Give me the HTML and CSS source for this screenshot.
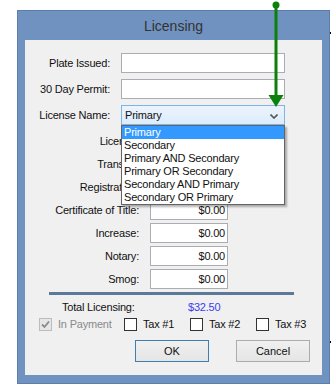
FILE: index.html
```html
<!DOCTYPE html>
<html lang="en">
<head>
    <meta charset="UTF-8">
    <meta name="viewport" content="width=device-width, initial-scale=1.0">
    <title>Licensing</title>
    <link rel="stylesheet" href="styles.css">
</head>
<body>
    <div class="window">
        <div class="titlebar">Licensing</div>
        <div class="client">
            <div class="row top-row">
                <label class="label">Plate Issued:</label>
                <div class="textbox long"></div>
            </div>
            <div class="row top-row">
                <label class="label">30 Day Permit:</label>
                <div class="textbox long"></div>
            </div>
            <div class="row top-row">
                <label class="label">License Name:</label>
                <div class="combo">
                    <span>Primary</span>
                    <svg class="chevron" width="8" height="5" viewBox="0 0 8 5"><polyline points="0.5,0.5 4,4 7.5,0.5" fill="none" stroke="#555" stroke-width="1.6"/></svg>
                    <ul class="dropdown">
                        <li class="selected">Primary</li>
                        <li>Secondary</li>
                        <li>Primary AND Secondary</li>
                        <li>Primary OR Secondary</li>
                        <li>Secondary AND Primary</li>
                        <li>Secondary OR Primary</li>
                    </ul>
                </div>
            </div>
            <div class="fees">
                <div class="row fee-row">
                    <label class="label">License:</label>
                    <div class="textbox money">$0.00</div>
                </div>
                <div class="row fee-row">
                    <label class="label">Transfer:</label>
                    <div class="textbox money">$0.00</div>
                </div>
                <div class="row fee-row">
                    <label class="label">Registration:</label>
                    <div class="textbox money">$0.00</div>
                </div>
                <div class="row fee-row">
                    <label class="label">Certificate of Title:</label>
                    <div class="textbox money">$0.00</div>
                </div>
                <div class="row fee-row">
                    <label class="label">Increase:</label>
                    <div class="textbox money">$0.00</div>
                </div>
                <div class="row fee-row">
                    <label class="label">Notary:</label>
                    <div class="textbox money">$0.00</div>
                </div>
                <div class="row fee-row">
                    <label class="label">Smog:</label>
                    <div class="textbox money">$0.00</div>
                </div>
            </div>
            <div class="separator"></div>
            <div class="total">
                <span class="total-label">Total Licensing:</span>
                <span class="total-value">$32.50</span>
            </div>
            <div class="checks">
                <div class="check first disabled">
                    <span class="box">
                        <svg width="11" height="11" viewBox="0 0 11 11"><polyline points="2,5.5 4.5,8 9,2.5" fill="none" stroke="#8a8a8a" stroke-width="1.8"/></svg>
                    </span>
                    <span>In Payment</span>
                </div>
                <div class="check"><span class="box"></span><span>Tax #1</span></div>
                <div class="check"><span class="box"></span><span>Tax #2</span></div>
                <div class="check"><span class="box"></span><span>Tax #3</span></div>
            </div>
            <div class="buttons">
                <button class="btn default">OK</button>
                <button class="btn">Cancel</button>
            </div>
        </div>
    </div>
    <span class="tick tick-top"></span>
    <span class="tick tick-bottom"></span>
    <svg class="pointer" width="331" height="384" viewBox="0 0 331 384">
        <circle cx="276" cy="5" r="3.5" fill="#0b800b"/>
        <line x1="276" y1="5" x2="276" y2="96" stroke="#0b800b" stroke-width="3"/>
        <polygon points="268.5,95 283.5,95 276,107" fill="#0b800b"/>
    </svg>
</body>
</html>
```
FILE: styles.css
```css
body {
    margin: 0;
    background: #fff;
    font-family: "Liberation Sans", Arial, sans-serif;
    font-size: 11px;
    letter-spacing: -0.2px;
    color: #111;
}
.window {
    margin: 10px 0 0 17px;
    width: 313px;
    box-sizing: border-box;
    background-color: #7092c0;
    border: 1px solid #5d7dab;
    padding: 0 7px 8px 7px;
}
.titlebar {
    height: 29px;
    line-height: 30px;
    text-align: center;
    font-size: 14px;
    letter-spacing: 0;
    color: #333;
}
.client {
    height: 335px;
    box-sizing: border-box;
    background-color: #f0f0f0;
    padding-top: 13px;
}
.row {
    display: flex;
    align-items: center;
    height: 20px;
}
.label {
    text-align: right;
    margin-right: 11px;
    white-space: nowrap;
}
.top-row {
    margin-bottom: 6px;
}
.top-row .label {
    width: 85px;
}
.fees {
    margin-top: 1px;
}
.fee-row {
    margin-bottom: 3px;
}
.fee-row .label {
    width: 114px;
}
.textbox {
    height: 20px;
    box-sizing: border-box;
    background: #fff;
    border: 1px solid #abadb3;
}
.long {
    width: 164px;
}
.money {
    width: 78px;
    text-align: right;
    padding-right: 2px;
    line-height: 18px;
}
.combo {
    position: relative;
    width: 164px;
    height: 20px;
    box-sizing: border-box;
    border: 1px solid #7eb4ea;
    background: linear-gradient(#ecf4fc, #dcecfc);
    padding-left: 3px;
    line-height: 18px;
}
.chevron {
    position: absolute;
    right: 6px;
    top: 8px;
}
.dropdown {
    position: absolute;
    top: 19px;
    left: -1px;
    width: 164px;
    box-sizing: border-box;
    margin: 0;
    padding: 0;
    list-style: none;
    background: #fff;
    border: 1px solid #646464;
    box-shadow: 2px 2px 2px rgba(0, 0, 0, 0.3);
    z-index: 2;
}
.dropdown li {
    height: 13px;
    line-height: 13px;
    padding-left: 2px;
    white-space: nowrap;
}
.dropdown .selected {
    background-color: #3399ff;
    color: #fff;
}
.separator {
    margin: 0 0 0 24px;
    width: 245px;
    height: 3px;
    background-color: #5b7a99;
}
.total {
    display: flex;
    margin-top: 5px;
    height: 14px;
    line-height: 14px;
}
.total-label {
    margin-left: 37px;
    width: 126px;
}
.total-value {
    color: #3c3cf0;
}
.checks {
    display: flex;
    align-items: center;
    margin-top: 3px;
    padding-left: 14px;
    height: 14px;
}
.check {
    display: flex;
    align-items: center;
    width: 66px;
}
.check.first {
    width: 85px;
}
.check .box {
    width: 13px;
    height: 13px;
    box-sizing: border-box;
    border: 1px solid #333;
    background: #fff;
    margin-right: 6px;
    display: flex;
    align-items: center;
    justify-content: center;
}
.check.disabled {
    color: #8a8a8a;
}
.check.disabled .box {
    border-color: #bcbcbc;
    background: #e6e6e6;
}
.buttons {
    display: flex;
    justify-content: flex-end;
    gap: 27px;
    margin-top: 9px;
    padding-right: 12px;
}
.btn {
    width: 74px;
    height: 22px;
    font-family: "Liberation Sans", Arial, sans-serif;
    font-size: 11px;
    color: #111;
    background: linear-gradient(#f0f0f0, #e5e5e5);
    border: 1px solid #acacac;
    padding: 0;
}
.btn.default {
    border-color: #3c7fb1;
}
.tick {
    position: absolute;
    left: 330px;
    width: 1px;
    height: 2px;
    background: #000;
}
.tick-top {
    top: 32px;
}
.tick-bottom {
    top: 341px;
}
.pointer {
    position: absolute;
    left: 0;
    top: 0;
    pointer-events: none;
}
```
